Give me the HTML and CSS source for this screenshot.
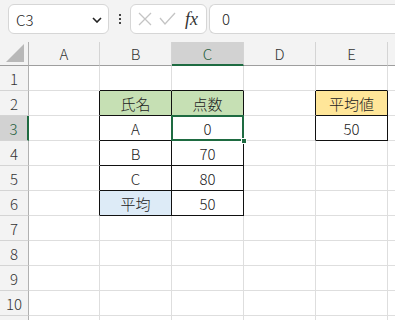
FILE: index.html
```html
<!DOCTYPE html>
<html lang="ja">
<head>
<meta charset="utf-8">
<link rel="stylesheet" href="styles.css">
</head>
<body>
<div class="bar">
  <div class="namebox">
    <span class="ref">C3</span>
    <svg class="chev" width="10" height="6" viewBox="0 0 10 6"><path d="M1 1 L5 5 L9 1" fill="none" stroke="#222" stroke-width="1.6"/></svg>
  </div>
  <div class="dots"><i></i><i></i><i></i></div>
  <div class="fxbox">
    <svg width="16" height="16" viewBox="0 0 16 16"><path d="M2 2 L14 14 M14 2 L2 14" stroke="#c4c4c4" stroke-width="1.3" fill="none"/></svg>
    <svg width="17" height="14" viewBox="0 0 17 14"><path d="M1 6 L6 12 L16 1" stroke="#c4c4c4" stroke-width="1.3" fill="none"/></svg>
    <span class="fx">fx</span>
  </div>
  <div class="formula">0</div>
</div>
<div class="sheet">
  <div class="hd corner"><svg width="18" height="18" viewBox="0 0 18 18"><path d="M18 0 L18 18 L0 18 Z" fill="#b8b8b8"/></svg></div>
  <div class="hd ch">A</div>
  <div class="hd ch">B</div>
  <div class="hd ch sel">C</div>
  <div class="hd ch">D</div>
  <div class="hd ch">E</div>
  <div class="hd ch"></div>

  <div class="hd rh">1</div>
  <div class="c"></div><div class="c bb"></div><div class="c bb"></div><div class="c"></div><div class="c bb"></div><div class="c"></div>

  <div class="hd rh">2</div>
  <div class="c br"></div><div class="c t green">氏名</div><div class="c t green">点数</div><div class="c br"></div><div class="c t yellow">平均値</div><div class="c"></div>

  <div class="hd rh rsel">3</div>
  <div class="c br"></div><div class="c t">A</div><div class="c t active">0<span class="frame"></span><span class="handle"></span></div><div class="c br"></div><div class="c t">50</div><div class="c"></div>

  <div class="hd rh">4</div>
  <div class="c br"></div><div class="c t">B</div><div class="c t">70</div><div class="c"></div><div class="c"></div><div class="c"></div>

  <div class="hd rh">5</div>
  <div class="c br"></div><div class="c t">C</div><div class="c t">80</div><div class="c"></div><div class="c"></div><div class="c"></div>

  <div class="hd rh">6</div>
  <div class="c br"></div><div class="c t blue">平均</div><div class="c t">50</div><div class="c"></div><div class="c"></div><div class="c"></div>

  <div class="hd rh">7</div>
  <div class="c"></div><div class="c"></div><div class="c"></div><div class="c"></div><div class="c"></div><div class="c"></div>
  <div class="hd rh">8</div>
  <div class="c"></div><div class="c"></div><div class="c"></div><div class="c"></div><div class="c"></div><div class="c"></div>
  <div class="hd rh">9</div>
  <div class="c"></div><div class="c"></div><div class="c"></div><div class="c"></div><div class="c"></div><div class="c"></div>
  <div class="hd rh">10</div>
  <div class="c"></div><div class="c"></div><div class="c"></div><div class="c"></div><div class="c"></div><div class="c"></div>
  <div class="hd rh"></div>
  <div class="c"></div><div class="c"></div><div class="c"></div><div class="c"></div><div class="c"></div><div class="c"></div>
</div>
</body>
</html>
```
FILE: styles.css
```css
* { box-sizing: border-box; }
html, body { margin: 0; padding: 0; }
body {
  width: 395px;
  height: 320px;
  overflow: hidden;
  background: #f3f3f3;
  font-family: "Noto Sans CJK JP", "Noto Sans", sans-serif;
  font-weight: 300;
  color: #222;
}
.bar {
  height: 42px;
  display: flex;
  align-items: flex-start;
  padding: 4px 0 0 8px;
  overflow: hidden;
}
.namebox {
  flex: none;
  width: 101px;
  height: 30px;
  background: #fff;
  border: 1px solid #d6d6d6;
  border-radius: 6px;
  display: flex;
  align-items: center;
  justify-content: space-between;
  padding: 0 6px 0 7px;
  font-size: 15px;
}
.ref { line-height: 1; }
.chev { margin-top: 1px; }
.dots {
  flex: none;
  width: 21px;
  height: 30px;
  display: flex;
  flex-direction: column;
  align-items: center;
  justify-content: center;
  gap: 2px;
}
.dots i {
  width: 2px;
  height: 2px;
  background: #444;
  display: block;
}
.fxbox {
  flex: none;
  width: 77px;
  height: 30px;
  background: #fff;
  border: 1px solid #d6d6d6;
  border-radius: 6px;
  display: flex;
  align-items: center;
  padding: 0 0 0 6px;
  gap: 6px;
}
.fx {
  font-family: "Liberation Serif", "DejaVu Serif", serif;
  font-style: italic;
  font-weight: normal;
  font-size: 18px;
  color: #333;
  margin-left: 3px;
}
.formula {
  flex: 1;
  margin-left: 2px;
  height: 30px;
  background: #fff;
  border: 1px solid #d6d6d6;
  border-right: none;
  border-radius: 6px 0 0 6px;
  padding-left: 12px;
  font-size: 15px;
  line-height: 28px;
}
.sheet {
  width: 395px;
  height: 278px;
  overflow: hidden;
  display: grid;
  grid-template-columns: 29px 71px 72px 72px 72px 72px 72px;
  grid-template-rows: 24px repeat(11, 25px);
  background: #fff;
  font-size: 15px;
}
.hd {
  background: #f3f3f3;
  color: #333;
  display: flex;
  align-items: center;
  justify-content: center;
}
.ch {
  border-right: 1px solid #d4d4d4;
  border-bottom: 1px solid #9e9e9e;
}
.corner {
  border-right: 1px solid #b0b0b0;
  border-bottom: 1px solid #9e9e9e;
  justify-content: flex-end;
  align-items: flex-end;
  padding: 0 4px 3px 0;
}
.corner svg { display: block; }
.ch.sel {
  background: #d2d2d2;
  color: #1f5e3c;
  border-bottom: 2px solid #1e6b41;
}
.rh {
  border-right: 1px solid #b0b0b0;
  border-bottom: 1px solid #d4d4d4;
}
.rh.rsel {
  background: #d2d2d2;
  color: #1f5e3c;
  border-right: 2px solid #1e6b41;
}
.c {
  border-right: 1px solid #dedede;
  border-bottom: 1px solid #dedede;
  display: flex;
  align-items: center;
  justify-content: center;
  color: #222;
}
.c.bb { border-bottom-color: #111; }
.c.br { border-right-color: #111; }
.c.t {
  border-right-color: #111;
  border-bottom-color: #111;
}
.green { background: #c6e0b4; }
.yellow { background: #ffe699; }
.blue { background: #ddebf7; }
.active { position: relative; }
.frame {
  position: absolute;
  left: -1px;
  top: -1px;
  right: -1px;
  bottom: -1px;
  border: 2px solid #1e6b41;
}
.handle {
  position: absolute;
  right: -4px;
  bottom: -4px;
  width: 6px;
  height: 6px;
  background: #1e6b41;
  border: 1px solid #fff;
}
```
